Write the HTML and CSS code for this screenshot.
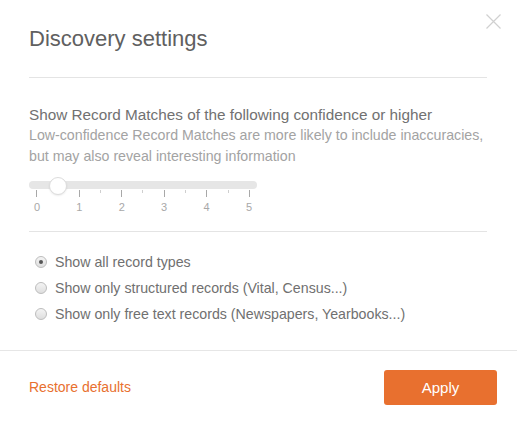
FILE: index.html
```html
<!DOCTYPE html>
<html>
<head>
<meta charset="utf-8">
<link rel="stylesheet" href="styles.css">
</head>
<body>
<div class="modal">
  <button class="close" aria-label="Close">
    <svg width="15" height="15" viewBox="0 0 15 15"><path d="M0.5 0.5 L14.5 14.5 M14.5 0.5 L0.5 14.5" stroke="#d0d0d0" stroke-width="1.2" fill="none"/></svg>
  </button>
  <div class="main">
    <header class="header">
      <h1 class="title">Discovery settings</h1>
    </header>
    <section class="confidence">
      <p class="lead">Show Record Matches of the following confidence or higher</p>
      <p class="hint">Low-confidence Record Matches are more likely to include inaccuracies, but may also reveal interesting information</p>
      <div class="slider">
        <div class="track"></div>
        <div class="thumb" style="left: 20px"></div>
      </div>
      <div class="ticks">
        <span class="tick major"></span><span class="tick minor"></span>
        <span class="tick major"></span><span class="tick minor"></span>
        <span class="tick major"></span><span class="tick minor"></span>
        <span class="tick major"></span><span class="tick minor"></span>
        <span class="tick major"></span><span class="tick minor"></span>
        <span class="tick major"></span>
      </div>
      <div class="labels">
        <span>0</span><span>1</span><span>2</span><span>3</span><span>4</span><span>5</span>
      </div>
    </section>
    <section class="types">
      <label class="radio"><span class="dot checked"></span>Show all record types</label>
      <label class="radio"><span class="dot"></span>Show only structured records (Vital, Census...)</label>
      <label class="radio"><span class="dot"></span>Show only free text records (Newspapers, Yearbooks...)</label>
    </section>
  </div>
  <footer class="footer">
    <a class="restore">Restore defaults</a>
    <button class="apply">Apply</button>
  </footer>
</div>
</body>
</html>
```

FILE: styles.css
```css
* { box-sizing: border-box; }
html, body {
  margin: 0;
  padding: 0;
  background: #fff;
  font-family: "Liberation Sans", Arial, sans-serif;
}
.modal {
  position: relative;
  width: 517px;
  height: 425px;
  display: flex;
  flex-direction: column;
}
.close {
  position: absolute;
  left: 486px;
  top: 14px;
  width: 15px;
  height: 15px;
  padding: 0;
  border: 0;
  background: none;
  display: block;
}
.close svg { display: block; }
.main {
  padding: 0 30px 23px 29px;
  border-bottom: 1px solid #e6e6e6;
}
.header {
  padding-top: 26px;
  padding-bottom: 25px;
  border-bottom: 1px solid #e4e4e4;
}
.title {
  margin: 0;
  font-size: 22px;
  line-height: 26px;
  font-weight: normal;
  color: #606060;
}
.confidence {
  padding-top: 26px;
  padding-bottom: 17px;
  border-bottom: 1px solid #e4e4e4;
}
.lead, .hint {
  margin: 0;
  line-height: 21px;
}
.lead { color: #717171; font-size: 15.3px; }
.hint { color: #a3a3a3; font-size: 14.2px; }
.slider {
  position: relative;
  width: 228px;
  height: 13px;
  margin-top: 10px;
}
.track {
  position: absolute;
  left: 0;
  top: 4px;
  width: 228px;
  height: 8px;
  border-radius: 4px;
  background: #e6e6e6;
}
.thumb {
  position: absolute;
  top: 0;
  width: 18px;
  height: 18px;
  border-radius: 50%;
  background: #fff;
  border: 1px solid #dcdcdc;
  box-shadow: 0 1px 2px rgba(0,0,0,0.08);
}
.ticks {
  width: 228px;
  padding: 0 7px 0 7px;
  display: flex;
  justify-content: space-between;
  align-items: flex-start;
  height: 7px;
}
.tick {
  width: 1px;
  display: block;
}
.tick.major { height: 7px; background: #a8a8a8; }
.tick.minor { height: 3px; background: #cfcfcf; }
.labels {
  width: 228px;
  padding: 0 3px;
  margin-top: 4px;
  display: flex;
  justify-content: space-between;
  font-size: 11px;
  line-height: 13px;
  color: #a8a8a8;
}
.labels span {
  width: 10px;
  text-align: center;
}
.types {
  padding-top: 17px;
}
.radio {
  display: flex;
  align-items: center;
  height: 26px;
  font-size: 14.2px;
  color: #707070;
}
.dot {
  position: relative;
  width: 12px;
  height: 12px;
  margin-left: 6px;
  margin-right: 8px;
  border-radius: 50%;
  border: 1px solid #bdbdbd;
  background: linear-gradient(#f4f4f4, #dedede);
  flex: none;
}
.dot.checked::after {
  content: "";
  position: absolute;
  left: 3px;
  top: 3px;
  width: 4px;
  height: 4px;
  border-radius: 50%;
  background: #555;
}
.footer {
  flex: 1;
  display: flex;
  align-items: flex-start;
  justify-content: space-between;
  padding: 19px 20px 0 29px;
}
.restore {
  font-size: 14px;
  line-height: 35px;
  color: #e8702f;
}
.apply {
  width: 113px;
  height: 35px;
  border: 0;
  border-radius: 3px;
  background: #e8702f;
  color: #fff;
  font-family: "Liberation Sans", Arial, sans-serif;
  font-size: 15px;
  padding: 0;
}
```
